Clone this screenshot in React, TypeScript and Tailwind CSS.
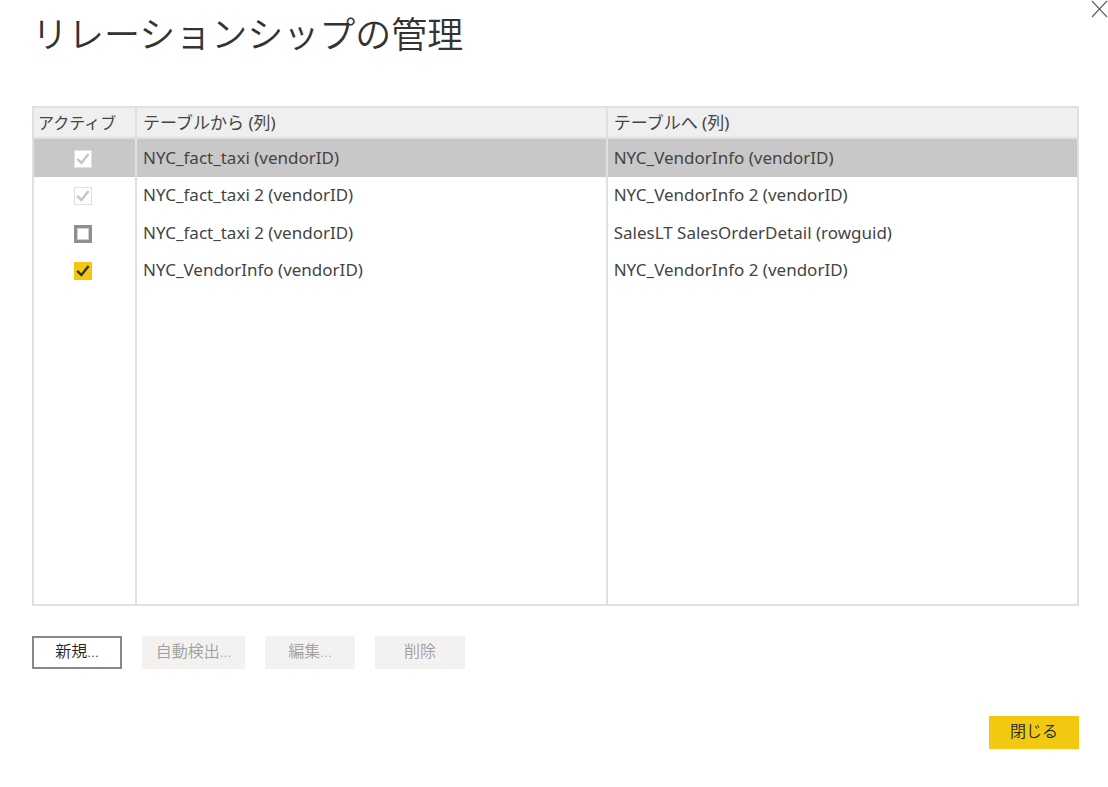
import { useState } from "react";
import clsx from "clsx";

type Relationship = {
  from: string;
  to: string;
  active: boolean;
  locked?: boolean;
};

const initial: Relationship[] = [
  { from: "NYC_fact_taxi (vendorID)", to: "NYC_VendorInfo (vendorID)", active: true, locked: true },
  { from: "NYC_fact_taxi 2 (vendorID)", to: "NYC_VendorInfo 2 (vendorID)", active: true, locked: true },
  { from: "NYC_fact_taxi 2 (vendorID)", to: "SalesLT SalesOrderDetail (rowguid)", active: false },
  { from: "NYC_VendorInfo (vendorID)", to: "NYC_VendorInfo 2 (vendorID)", active: true },
];

function ActiveBox({ row, onToggle }: { row: Relationship; onToggle: () => void }) {
  return (
    <span className="mx-auto grid size-[18px]">
      <input
        type="checkbox"
        checked={row.active}
        disabled={row.locked}
        onChange={onToggle}
        aria-label={`アクティブ: ${row.from} - ${row.to}`}
        className={clsx(
          "col-start-1 row-start-1 size-[18px] appearance-none",
          row.locked && "border border-[#dfdfdf] bg-white",
          !row.locked && row.active && "bg-[#f2c811]",
          !row.locked && !row.active && "border-[3px] border-[#8f8f8f] bg-white shadow-[inset_0_0_0_1px_#cfcfcf]",
        )}
      />
      {row.active && (
        <svg
          viewBox="0 0 18 18"
          fill="none"
          strokeWidth="2.4"
          aria-hidden="true"
          className={clsx(
            "pointer-events-none col-start-1 row-start-1 size-[18px]",
            row.locked ? "stroke-[#c6c6c6]" : "stroke-[#333333]",
          )}
        >
          <path d="M3.2 8.8 L7.4 13 L14.6 4" />
        </svg>
      )}
    </span>
  );
}

export default function App() {
  const [rows, setRows] = useState(initial);
  const [selected, setSelected] = useState(0);

  const toggle = (index: number) =>
    setRows(rows.map((row, i) => (i === index ? { ...row, active: !row.active } : row)));

  const action = "h-[33px] pb-[3px] font-['Open_Sans','Noto_Sans_CJK_JP',sans-serif] text-base font-[350]";
  const disabledAction = "bg-[#f3f2f1] text-[#a19f9d]";

  return (
    <main className="relative min-h-screen bg-white pr-[29px] pb-9 pl-8 font-['Noto_Sans','Noto_Sans_CJK_JP',sans-serif] text-[#444444]">
      <button type="button" aria-label="ダイアログを閉じる" className="absolute top-0 right-0 size-[18px]">
        <svg viewBox="0 0 18 18" fill="none" strokeWidth="1.2" aria-hidden="true" className="size-[18px] stroke-[#666666]">
          <path d="M2 1 L17 17 M17 1 L2 17" />
        </svg>
      </button>

      <h1 className="pt-1.5 pb-12 font-['Noto_Sans_CJK_JP',sans-serif] text-4xl leading-[52px] font-[350] text-[#333333]">
        リレーションシップの管理
      </h1>

      <table className="h-[500px] w-full table-fixed border-separate border-spacing-0 border-2 border-[#e0e0e0] text-[17px] leading-6">
        <colgroup>
          <col className="w-[103px]" />
          <col />
          <col className="w-[45%]" />
        </colgroup>
        <thead>
          <tr className="h-[31px] bg-[#efefef] text-left">
            <th scope="col" className="border-r-2 border-b-2 border-[#e0e0e0] p-0 pl-1 text-base font-normal">アクティブ</th>
            <th scope="col" className="border-r-2 border-b-2 border-[#e0e0e0] p-0 pl-1.5 font-normal">テーブルから (列)</th>
            <th scope="col" className="border-b-2 border-[#e0e0e0] p-0 pl-1.5 font-normal">テーブルへ (列)</th>
          </tr>
        </thead>
        <tbody>
          {rows.map((row, i) => (
            <tr
              key={i}
              onClick={() => setSelected(i)}
              className={clsx("odd:h-[38px] even:h-[37px] even:[&>td]:pb-px", i === selected && "bg-[#c8c8c8]")}
            >
              <td className="border-r-2 border-[#e0e0e0] p-0 pt-0.5 pr-1">
                <ActiveBox row={row} onToggle={() => toggle(i)} />
              </td>
              <td className="border-r-2 border-[#e0e0e0] p-0 pl-1.5">{row.from}</td>
              <td className="p-0 pl-1.5">{row.to}</td>
            </tr>
          ))}
          <tr aria-hidden="true">
            <td className="border-r-2 border-[#e0e0e0] p-0" />
            <td className="border-r-2 border-[#e0e0e0] p-0" />
            <td className="p-0" />
          </tr>
        </tbody>
      </table>

      <div className="mt-[30px] flex gap-5">
        <button type="button" className={clsx(action, "w-[90px] border-2 border-[#8a8886] bg-white text-[#252423]")}>新規...</button>
        <button type="button" disabled className={clsx(action, disabledAction, "w-[103px]")}>自動検出...</button>
        <button type="button" disabled className={clsx(action, disabledAction, "w-[90px]")}>編集...</button>
        <button type="button" disabled className={clsx(action, disabledAction, "w-[90px]")}>削除</button>
      </div>

      <div className="mt-[47px] flex justify-end">
        <button type="button" className={clsx(action, "w-[90px] bg-[#f2c811] text-[#252423]")}>閉じる</button>
      </div>
    </main>
  );
}
